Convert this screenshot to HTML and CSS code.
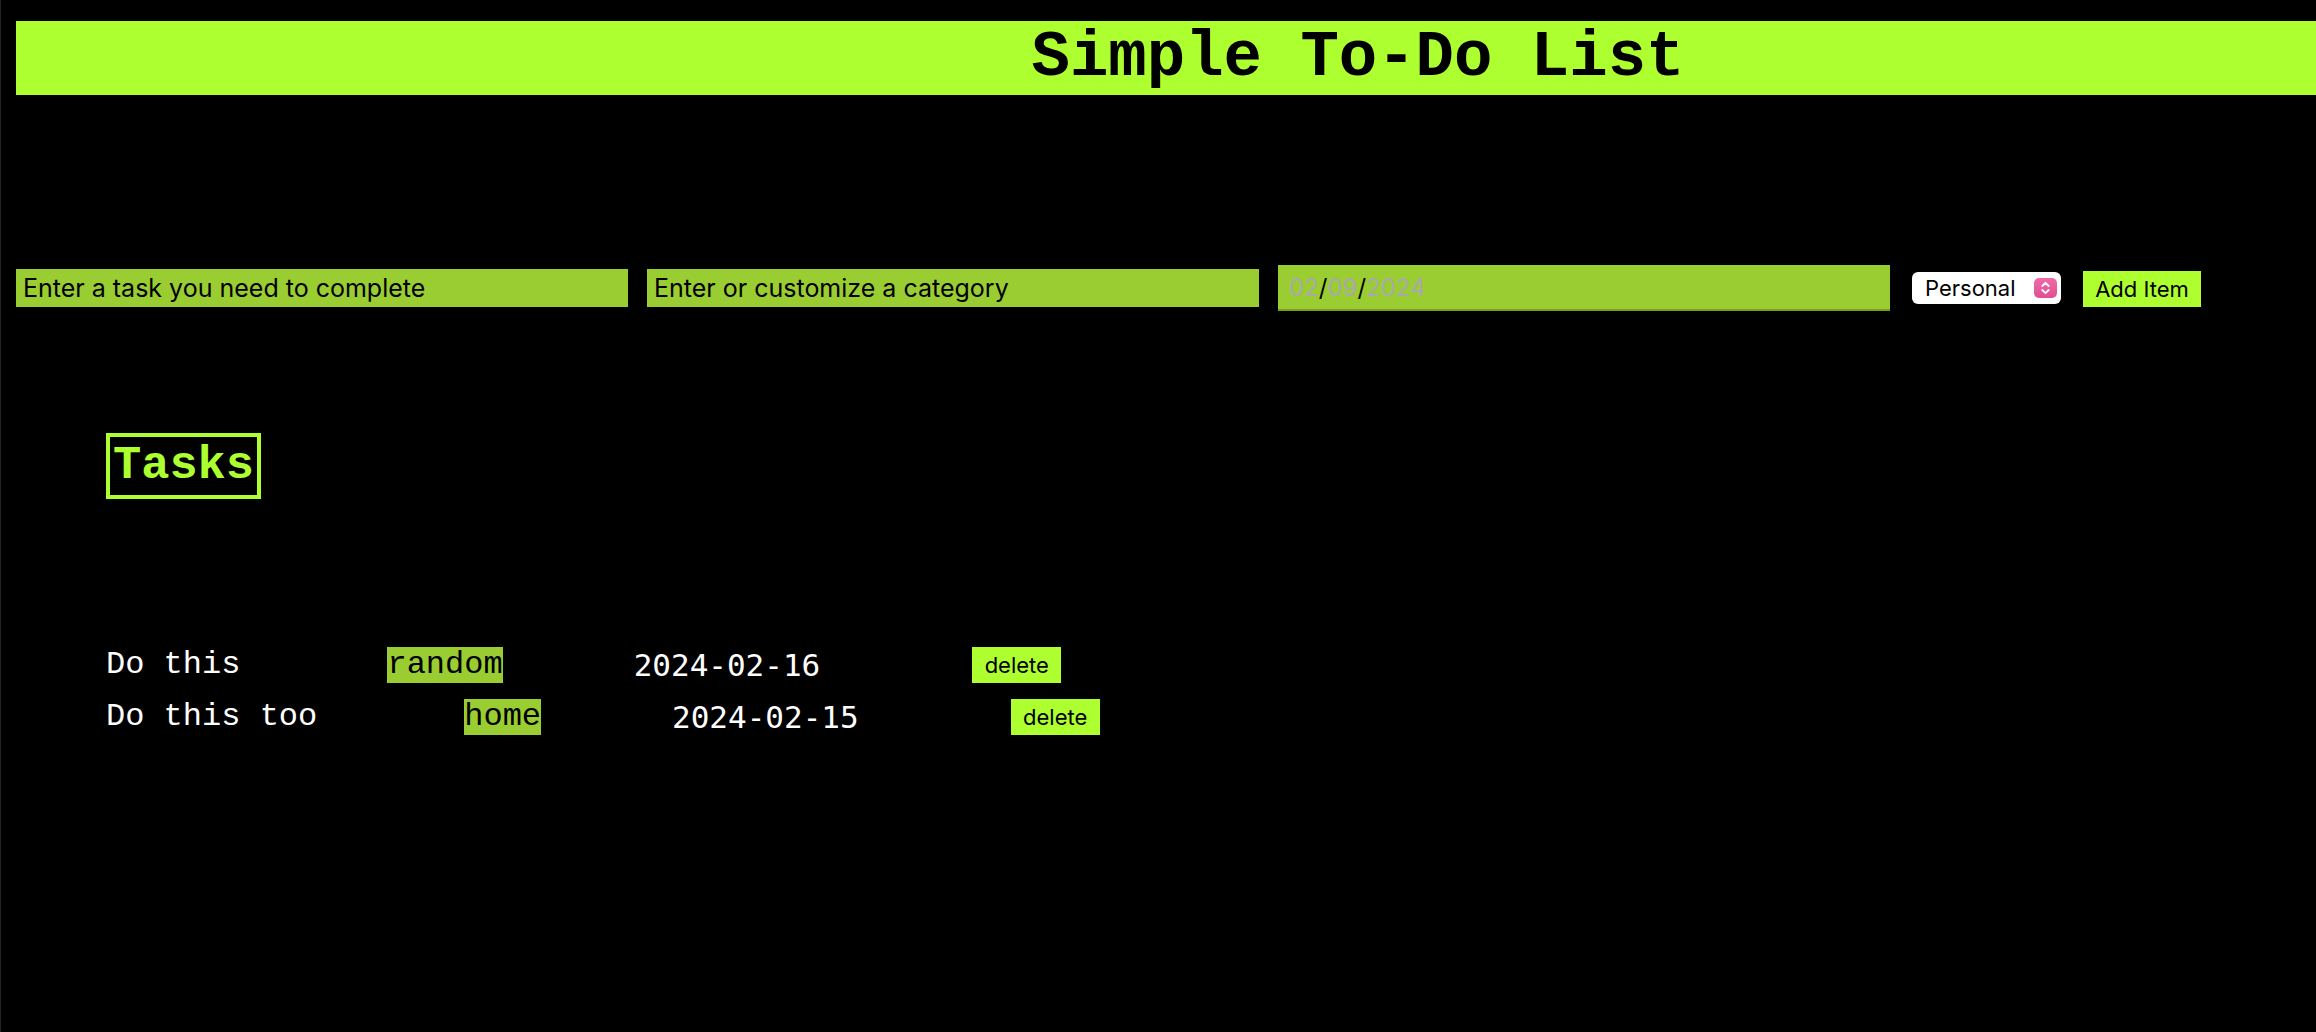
FILE: index.html
```html
<!DOCTYPE html>
<html lang="en">
<head>
<meta charset="utf-8">
<title>Simple To-Do List</title>
<link rel="stylesheet" href="styles.css">
</head>
<body>
<header class="banner">
  <h1 class="banner-title">Simple To-Do List</h1>
</header>

<form class="entry-form">
  <input class="field field-task" type="text" placeholder="Enter a task you need to complete">
  <input class="field field-category" type="text" placeholder="Enter or customize a category">
  <div class="date-field">
    <span class="date-part">02</span><span class="date-sep">/</span><span class="date-part">09</span><span class="date-sep">/</span><span class="date-part">2024</span>
  </div>
  <div class="select-wrap">
    <select class="category-select">
      <option>Personal</option>
      <option>Work</option>
      <option>Home</option>
    </select>
    <span class="stepper">
      <svg width="23" height="20" viewBox="0 0 23 20">
        <defs>
          <linearGradient id="pk" x1="0" y1="0" x2="0" y2="1">
            <stop offset="0" stop-color="#f06aa8"/>
            <stop offset="1" stop-color="#e24d92"/>
          </linearGradient>
        </defs>
        <rect x="0" y="0" width="23" height="20" rx="5" fill="url(#pk)"/>
        <path d="M8.3 8 L11.5 4.8 L14.7 8" fill="none" stroke="#fff" stroke-width="1.8" stroke-linecap="round" stroke-linejoin="round"/>
        <path d="M8.3 12 L11.5 15.2 L14.7 12" fill="none" stroke="#fff" stroke-width="1.8" stroke-linecap="round" stroke-linejoin="round"/>
      </svg>
    </span>
  </div>
  <button class="add-btn" type="button">Add Item</button>
</form>

<section class="tasks">
  <h2 class="tasks-title">Tasks</h2>
  <ul class="task-list">
    <li class="task">
      <span class="task-name">Do this</span>
      <span class="task-cat">random</span>
      <span class="task-date">2024-02-16</span>
      <button class="del-btn" type="button">delete</button>
    </li>
    <li class="task">
      <span class="task-name">Do this too</span>
      <span class="task-cat">home</span>
      <span class="task-date">2024-02-15</span>
      <button class="del-btn" type="button">delete</button>
    </li>
  </ul>
</section>
</body>
</html>
```

FILE: styles.css
```css
html {
  overflow: hidden;
  background: #000;
}

body {
  margin: 0;
  min-height: 1032px;
  background: #000;
  border-left: 1px solid #262626;
  box-sizing: border-box;
}

.banner {
  margin: 21px 0 0 15px;
  width: 2684px;
  height: 74px;
  background: #adff2f;
}

.banner-title {
  margin: 0;
  text-align: center;
  font-family: "Liberation Mono", "Courier New", monospace;
  font-weight: bold;
  font-size: 64px;
  line-height: 74px;
  color: #000;
}

.entry-form {
  display: flex;
  align-items: center;
  height: 46px;
  margin: 170px 0 0 15px;
}

.field {
  width: 612px;
  height: 38px;
  box-sizing: border-box;
  border: none;
  outline: none;
  padding: 0 0 0 7px;
  margin: 0 19px 0 0;
  background: #9acd32;
  color: #000;
  font-family: Inter, Roboto, sans-serif;
  font-size: 25px;
}

.field::placeholder {
  color: #000;
  opacity: 1;
}

.date-field {
  width: 612px;
  height: 46px;
  box-sizing: border-box;
  padding: 0 0 0 11px;
  margin-right: 22px;
  background: #9acd32;
  border-bottom: 2px solid #78a01f;
  display: flex;
  align-items: center;
  font-family: Inter, Roboto, sans-serif;
  font-size: 24px;
}

.date-part {
  color: #a9a9a9;
}

.date-sep {
  color: #000;
}

.select-wrap {
  position: relative;
  width: 149px;
  height: 32px;
  margin-right: 22px;
}

.category-select {
  appearance: none;
  -webkit-appearance: none;
  width: 100%;
  height: 100%;
  border: none;
  border-radius: 6px;
  background: #fff;
  color: #000;
  padding: 0 0 0 13px;
  font-family: Inter, Roboto, sans-serif;
  font-size: 22px;
  outline: none;
}

.stepper {
  position: absolute;
  top: 6px;
  right: 4px;
  width: 23px;
  height: 20px;
  display: block;
  pointer-events: none;
}

.stepper svg {
  display: block;
}

.add-btn {
  width: 118px;
  height: 36px;
  border: none;
  padding: 0;
  margin-top: 1px;
  background: #adff2f;
  color: #000;
  font-family: Inter, Roboto, sans-serif;
  font-size: 22px;
}

.tasks {
  margin: 122px 0 0 105px;
}

.tasks-title {
  display: inline-block;
  margin: 0;
  padding: 3px;
  border: 4px solid #adff2f;
  color: #adff2f;
  font-family: "Liberation Mono", "Courier New", monospace;
  font-weight: bold;
  font-size: 47px;
  line-height: 52px;
}

.task-list {
  list-style: none;
  margin: 148px 0 0 0;
  padding: 0;
  display: flex;
  flex-direction: column;
  gap: 16px;
}

.task {
  display: flex;
  align-items: center;
  height: 36px;
}

.task-name {
  color: #fff;
  font-family: "Liberation Mono", "Courier New", monospace;
  font-size: 32px;
  line-height: 36px;
}

.task-cat {
  margin-left: 147px;
  background: #9acd32;
  color: #000;
  font-family: "Liberation Mono", "Courier New", monospace;
  font-size: 32px;
  line-height: 36px;
}

.task-date {
  margin-left: 131px;
  color: #fff;
  font-family: "DejaVu Sans Mono", monospace;
  font-size: 31px;
  line-height: 36px;
}

.del-btn {
  margin-left: 152px;
  width: 89px;
  height: 36px;
  border: none;
  padding: 0;
  background: #adff2f;
  color: #000;
  font-family: Inter, Roboto, sans-serif;
  font-size: 22px;
}
```
